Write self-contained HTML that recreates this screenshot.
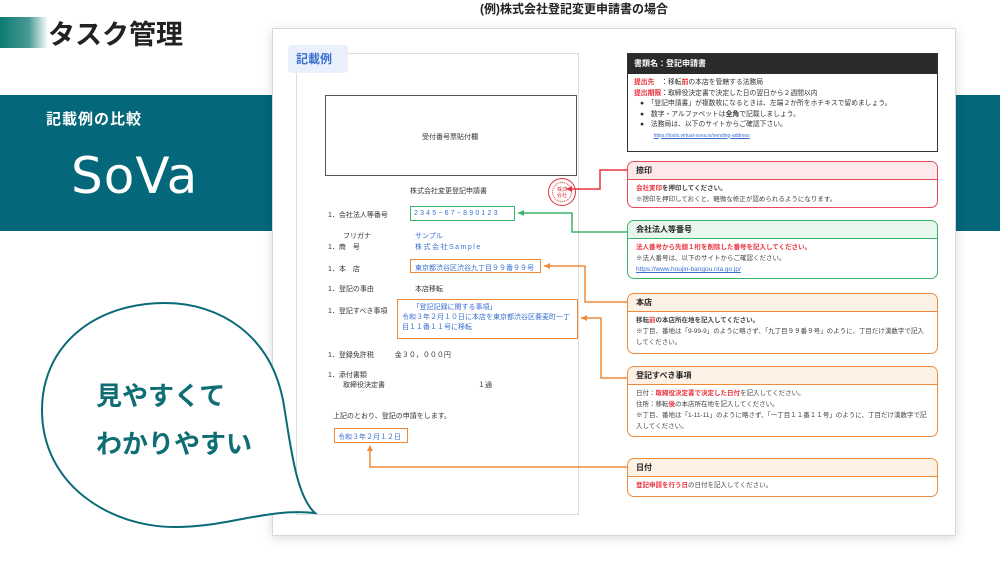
<!DOCTYPE html>
<html><head><meta charset="utf-8"><style>
*{margin:0;padding:0;box-sizing:border-box}
body{width:1000px;height:563px;overflow:hidden;background:#fff;position:relative;font-family:"Liberation Sans","Noto Sans CJK JP",sans-serif;color:#333}
.abs{position:absolute}
.band{left:0;top:95px;width:1000px;height:136px;background:#04677a}
.card{left:272px;top:28px;width:684px;height:508px;background:#fff;border:1px solid #d8d8d8;box-shadow:0 2px 10px rgba(0,0,0,.15)}
.doc{left:296px;top:53px;width:283px;height:462px;border:1px solid #ddd;background:#fff}
.s{font-size:7px;white-space:nowrap;color:#333}
.b{color:#3a6fd0}
.bx{position:absolute;border:1.5px solid}
.pn{position:absolute;left:627px;width:311px;border:1.5px solid;border-radius:7px;background:#fff;font-size:6.5px;overflow:hidden}
.pn .h{font-weight:bold;font-size:8px;padding:3px 8px;border-bottom:1.5px solid;color:#222}
.pn .c{padding:3px 8px;line-height:11px;color:#444}
.r{color:#e8323c;font-weight:bold}
</style></head><body>
<div class="abs" style="left:0;top:17px;width:48px;height:31px;background:linear-gradient(90deg,#0b7a72,#4a9a95 60%,#fff)"></div>
<div class="abs" style="left:48px;top:13px;font-size:27px;font-weight:bold;color:#222">タスク管理</div>
<div class="abs band"></div>
<div class="abs" style="left:46px;top:108px;font-size:15px;color:#fff;font-weight:bold;letter-spacing:1px">記載例の比較</div>
<div class="abs" style="left:71px;top:146px;font-size:50px;color:#fff;letter-spacing:1px;font-family:'DejaVu Sans',sans-serif;line-height:60px">SoVa</div>
<div class="abs" style="left:480px;top:0;font-size:12px;font-weight:bold;color:#222">(例)株式会社登記変更申請書の場合</div>
<div class="abs card"></div>
<div class="abs doc"></div>
<div class="abs" style="left:288px;top:45px;width:60px;height:28px;background:#eaf0fb;border-radius:4px;color:#3a6fd0;font-weight:bold;font-size:12px;padding:5px 0 0 8px">記載例</div>
<div class="abs" style="left:325px;top:95px;width:252px;height:81px;border:1px solid #555"></div>
<div class="abs s" style="left:422px;top:132px">受付番号票貼付欄</div>
<div class="abs s" style="left:410px;top:186px">株式会社変更登記申請書</div>
<div class="abs" style="left:548px;top:178px;width:28px;height:28px;border:1.5px solid #d33;border-radius:50%;padding:3px"><div style="width:100%;height:100%;border:1px dotted #d33;border-radius:50%;font-size:5px;color:#d33;text-align:center;line-height:6px;padding-top:4px">株式<br>会社</div></div>
<div class="abs s" style="left:328px;top:210px">1．会社法人等番号</div>
<div class="bx" style="left:410px;top:206px;width:105px;height:15px;border-color:#3bb36a"></div>
<div class="abs s b" style="left:414px;top:210px;letter-spacing:2.2px">2345−67−890123</div>
<div class="abs s" style="left:343px;top:231px">フリガナ</div><div class="abs s b" style="left:415px;top:231px">サンプル</div>
<div class="abs s" style="left:328px;top:242px">1．商　号</div><div class="abs s b" style="left:415px;top:242px;letter-spacing:1.5px">株式会社Sample</div>
<div class="abs s" style="left:328px;top:264px">1．本　店</div>
<div class="bx" style="left:410px;top:259px;width:131px;height:14px;border-color:#ee8a3a"></div>
<div class="abs s b" style="left:415px;top:263px">東京都渋谷区渋谷九丁目９９番９９号</div>
<div class="abs s" style="left:328px;top:284px">1．登記の事由</div><div class="abs s" style="left:415px;top:284px">本店移転</div>
<div class="abs s" style="left:328px;top:306px">1．登記すべき事項</div>
<div class="bx" style="left:397px;top:299px;width:181px;height:40px;border-color:#ee8a3a"></div>
<div class="abs s b" style="left:402px;top:303px;line-height:10px">　　「登記記録に関する事項」<br>令和３年２月１０日に本店を東京都渋谷区蕎麦町一丁<br>目１１番１１号に移転</div>
<div class="abs s" style="left:328px;top:350px">1．登録免許税　　　金３０，０００円</div>
<div class="abs s" style="left:328px;top:370px">1．添付書類</div>
<div class="abs s" style="left:343px;top:380px">取締役決定書</div><div class="abs s" style="left:478px;top:380px">１通</div>
<div class="abs s" style="left:333px;top:411px">上記のとおり、登記の申請をします。</div>
<div class="bx" style="left:334px;top:428px;width:74px;height:15px;border-color:#ee8a3a"></div>
<div class="abs s b" style="left:338px;top:432px">令和３年２月１２日</div>

<svg class="abs" style="left:0;top:0" width="1000" height="563">
<g fill="none" stroke-width="1.5">
<polyline points="627,170 600,170 600,189 566,189" stroke="#e8323c"/>
<polyline points="627,232 572,232 572,213 518,213" stroke="#3bb36a"/>
<polyline points="627,302 585,302 585,266 544,266" stroke="#ee8a3a"/>
<polyline points="627,378 601,378 601,318 581,318" stroke="#ee8a3a"/>
<polyline points="627,467 370,467 370,447" stroke="#ee8a3a"/>
<path d="M315,513 C295,495 290,440 283,400 C270,335 220,303 165,303 C95,303 42,345 42,410 C42,485 110,527 175,527 C230,527 265,508 315,513 Z" stroke="#0a6a78" stroke-width="2" fill="#fff"/>
</g>
<g fill="#e8323c"><polygon points="566,189 572,186 572,192"/></g>
<g fill="#3bb36a"><polygon points="518,213 524,210 524,216"/></g>
<g fill="#ee8a3a"><polygon points="544,266 550,263 550,269"/><polygon points="581,318 587,315 587,321"/><polygon points="370,445 367,451 373,451"/></g>
</svg>
<div class="abs" style="left:96px;top:372px;font-size:26px;font-weight:bold;color:#0e6e74;line-height:48px">見やすくて<br>わかりやすい</div>

<div class="abs" style="left:627px;top:53px;width:311px;height:99px;border:1.5px solid #333;background:#fff;font-size:6.8px">
<div style="background:#2b2b2b;color:#fff;font-weight:bold;font-size:8px;padding:4px 6px;height:20px">書類名：登記申請書</div>
<div style="padding:4px 6px;line-height:10.5px;color:#333"><span class="r">提出先</span>　：移転<span class="r">前</span>の本店を管轄する法務局<br><span class="r">提出期限</span>：取締役決定書で決定した日の翌日から２週間以内<br>
<div style="padding-left:6px">●　「登記申請書」が複数枚になるときは、左端２か所をホチキスで留めましょう。<br>●　数字・アルファベットは<b>全角</b>で記載しましょう。<br>●　法務局は、以下のサイトからご確認下さい。<br>　　<span style="color:#3a6fd0;text-decoration:underline;font-size:5px">https://tools.virtual-sova.io/sending-address</span></div></div></div>

<div class="pn" style="top:161px;height:47px;border-color:#e8485a"><div class="h" style="background:#fde8ea;border-color:#e8485a">捺印</div><div class="c"><span class="r">会社実印</span><b>を押印してください。</b><br>※捨印を押印しておくと、軽微な修正が認められるようになります。</div></div>
<div class="pn" style="top:220px;height:59px;border-color:#3bb36a"><div class="h" style="background:#e8f7ee;border-color:#3bb36a">会社法人等番号</div><div class="c"><span class="r">法人番号から先頭１桁を削除した番号を記入してください。</span><br>※法人番号は、以下のサイトからご確認ください。<br><span style="color:#3a6fd0;text-decoration:underline">https://www.houjin-bangou.nta.go.jp/</span></div></div>
<div class="pn" style="top:293px;height:61px;border-color:#ee8a3a"><div class="h" style="background:#fdf0e4;border-color:#ee8a3a">本店</div><div class="c"><b>移転<span class="r">前</span>の本店所在地を記入してください。</b><br>※丁目、番地は「9-99-9」のように略さず、「九丁目９９番９号」のように、丁目だけ漢数字で記入してください。</div></div>
<div class="pn" style="top:366px;height:71px;border-color:#ee8a3a"><div class="h" style="background:#fdf0e4;border-color:#ee8a3a">登記すべき事項</div><div class="c">日付：<span class="r">取締役決定書で決定した日付</span>を記入してください。<br>住所：移転<span class="r">後</span>の本店所在地を記入してください。<br>※丁目、番地は「1-11-11」のように略さず、「一丁目１１番１１号」のように、丁目だけ漢数字で記入してください。</div></div>
<div class="pn" style="top:458px;height:39px;border-color:#ee8a3a"><div class="h" style="background:#fdf0e4;border-color:#ee8a3a">日付</div><div class="c"><span class="r">登記申請を行う日</span>の日付を記入してください。</div></div>
</body></html>
